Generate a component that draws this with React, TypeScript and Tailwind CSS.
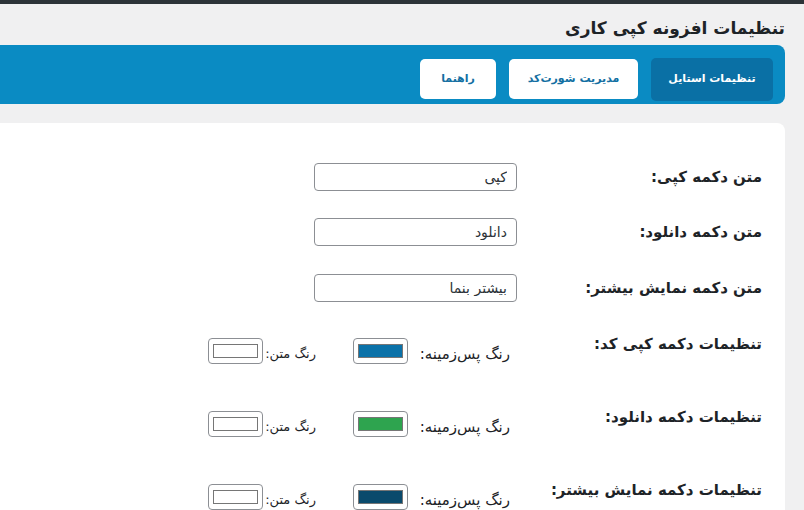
import React from 'react';

const TEXT_FIELDS = [
  { label: 'متن دکمه کپی:', value: 'کپی', gap: 'mt-0' },
  { label: 'متن دکمه دانلود:', value: 'دانلود', gap: 'mt-[27px]' },
  { label: 'متن دکمه نمایش بیشتر:', value: 'بیشتر بنما', gap: 'mt-[28px]' },
];

const COLOR_ROWS = [
  { label: 'تنظیمات دکمه کپی کد:', bg: 'bg-[#0b72a9]', gap: 'mt-[32px]' },
  { label: 'تنظیمات دکمه دانلود:', bg: 'bg-[#2ea44f]', gap: 'mt-[43px]' },
  { label: 'تنظیمات دکمه نمایش بیشتر:', bg: 'bg-[#0a4a6c]', gap: 'mt-[43px]' },
];

function Swatch({ fill }: { fill: string }) {
  return (
    <div className="w-[55px] h-[26px] shrink-0 rounded-[4px] border border-[#8c8f94] bg-white px-[4px] py-[5px]">
      <div className={`w-full h-full border border-[#767676] ${fill}`} />
    </div>
  );
}

export default function App() {
  return (
    <div
      dir="rtl"
      className="h-[510px] overflow-hidden bg-[#f0f0f1] text-[#1d2327] font-['DejaVu_Sans',sans-serif]"
    >
      <div className="h-[4px] bg-[#2c3338]" />

      <div className="pr-[19px]">
        <h1 className="pt-[10px] text-[17px] leading-[28px] font-bold">تنظیمات افزونه کپی کاری</h1>

        {/* tab bar */}
        <div className="mt-[3px] h-[59px] bg-[#0a8bc3] rounded-r-[8px] flex items-start gap-[13px] pr-[12px] pt-[13px]">
          <button className="w-[122px] h-[43px] rounded-[5px] bg-[#0a70a5] text-white text-[11px] font-bold">
            تنظیمات استایل
          </button>
          <button className="mt-[1px] w-[129px] h-[40px] rounded-[5px] bg-white text-[#136fa2] text-[11px] font-bold">
            مدیریت شورت‌کد
          </button>
          <button className="mt-[1px] w-[76px] h-[40px] rounded-[5px] bg-white text-[#136fa2] text-[11px] font-bold">
            راهنما
          </button>
        </div>

        {/* settings card */}
        <div className="mt-[19px] h-[400px] bg-white rounded-tr-[8px] pr-[23px] pt-[40px]">
          {TEXT_FIELDS.map(({ label, value, gap }) => (
            <div key={label} className={`flex items-center h-[28px] ${gap}`}>
              <div className="w-[245px] shrink-0 text-[15px] font-bold whitespace-nowrap">{label}</div>
              <input
                dir="rtl"
                readOnly
                defaultValue={value}
                className="w-[203px] h-[28px] rounded-[4px] border border-[#8c8f94] bg-white px-[9px] text-[14px] text-[#2c3338] outline-none"
              />
            </div>
          ))}

          {COLOR_ROWS.map(({ label, bg, gap }) => (
            <div key={label} className={`flex items-start ${gap}`}>
              <div className="w-[245px] shrink-0 text-[15px] leading-[20px] font-bold whitespace-nowrap">{label}</div>
              <div className="mt-[4px] flex items-end">
                <span className="w-[109px] shrink-0 pr-[7px] text-[15px] leading-[20px] whitespace-nowrap">رنگ پس‌زمینه:</span>
                <Swatch fill={bg} />
                <span className="w-[90px] shrink-0 pr-[37px] text-[13px] leading-[20px] whitespace-nowrap">رنگ متن:</span>
                <Swatch fill="bg-white" />
              </div>
            </div>
          ))}
        </div>
      </div>
    </div>
  );
}
